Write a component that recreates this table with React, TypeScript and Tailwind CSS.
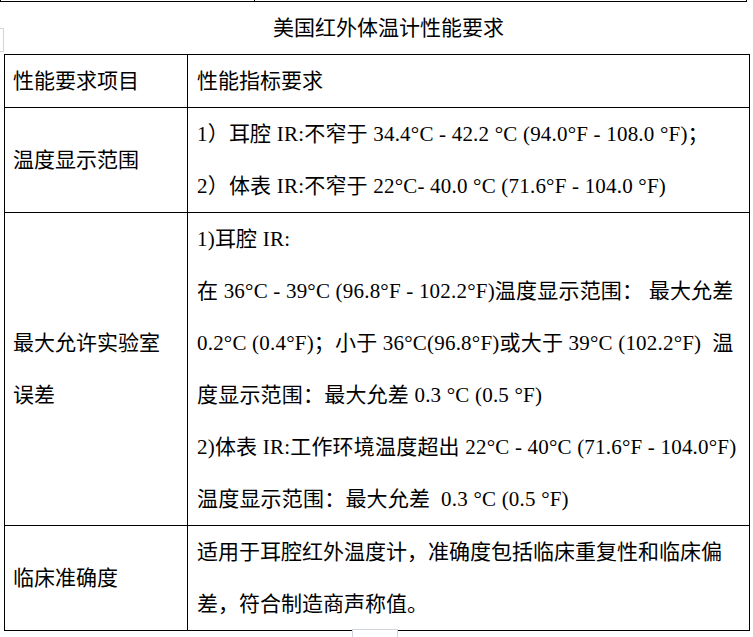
const sans = "font-['Liberation_Sans','Noto_Sans_CJK_SC',sans-serif]";
const serif = "font-['Liberation_Serif','Noto_Sans_CJK_SC',serif] tracking-[0.2px]";

const rangeLines = [
  "1）耳腔 IR:不窄于 34.4°C - 42.2 °C (94.0°F - 108.0 °F)；",
  "2）体表 IR:不窄于 22°C- 40.0 °C (71.6°F - 104.0 °F)",
];

const errorLines = [
  "1)耳腔 IR:",
  "在 36°C - 39°C (96.8°F - 102.2°F)温度显示范围： 最大允差",
  "0.2°C (0.4°F)；小于 36°C(96.8°F)或大于 39°C (102.2°F)  温",
  "度显示范围：最大允差 0.3 °C (0.5 °F)",
  "2)体表 IR:工作环境温度超出 22°C - 40°C (71.6°F - 104.0°F)",
  "温度显示范围：最大允差  0.3 °C (0.5 °F)",
];

const accuracyLines = [
  "适用于耳腔红外温度计，准确度包括临床重复性和临床偏",
  "差，符合制造商声称值。",
];

function Lines({ lines, font }: { lines: string[]; font: string }) {
  return (
    <>
      {lines.map((l) => (
        <div key={l} className={`${font} whitespace-pre`}>
          {l}
        </div>
      ))}
    </>
  );
}

export default function App() {
  return (
    <div className="relative w-[753px] h-[637px] bg-white overflow-hidden text-black">
      {/* tail of the previous table */}
      <div className="flex w-[747px] h-[2px] border-l border-r border-b border-black">
        <div className="w-[254px] border-r border-black" />
      </div>

      <div className={`${sans} h-[52px] flex items-center justify-center pl-6 text-[21px]`}>
        美国红外体温计性能要求
      </div>

      <table className="ml-[4px] w-[746px] border-collapse text-[21px] leading-[52px]">
        <tbody>
          <tr>
            <td className={`${sans} w-[183px] border border-black pl-2 align-middle`}>性能要求项目</td>
            <td className={`${sans} border border-black pl-[9px]`}>性能指标要求</td>
          </tr>
          <tr>
            <td className={`${sans} border border-black pl-2 align-middle`}>温度显示范围</td>
            <td className="border border-black pl-[9px]">
              <Lines lines={rangeLines} font={serif} />
            </td>
          </tr>
          <tr>
            <td className={`${sans} border border-black pl-2 align-middle`}>
              <div>最大允许实验室</div>
              <div>误差</div>
            </td>
            <td className="border border-black pl-[9px]">
              <Lines lines={errorLines} font={serif} />
            </td>
          </tr>
          <tr>
            <td className={`${sans} border border-black pl-2 align-middle`}>临床准确度</td>
            <td className="border border-black pl-[9px]">
              <Lines lines={accuracyLines} font={sans} />
            </td>
          </tr>
        </tbody>
      </table>

      {/* small editor handles */}
      <div className="absolute left-0 top-[28px] w-[4px] h-[24px] border border-l-0 border-gray-300 bg-white" />
      <div className="absolute left-[352px] top-[629px] w-[46px] h-[12px] border border-gray-300 bg-white" />
    </div>
  );
}
